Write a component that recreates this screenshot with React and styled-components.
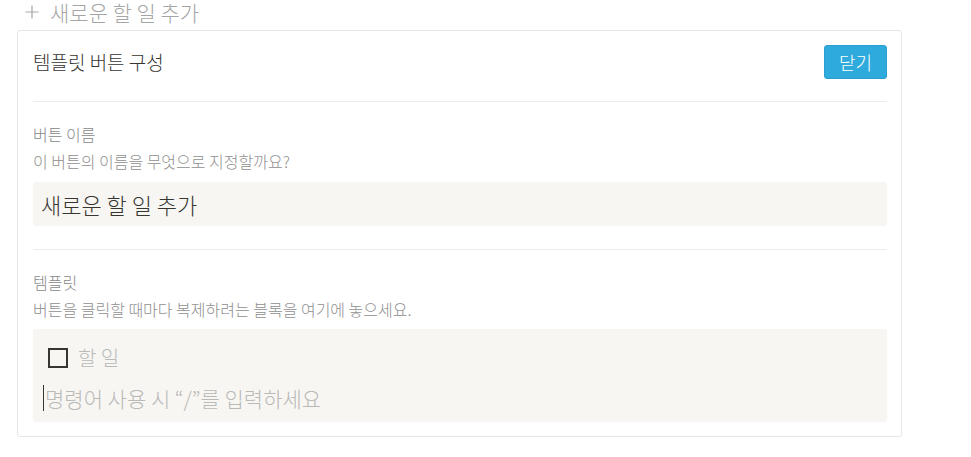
import React from 'react'
import styled, { createGlobalStyle } from 'styled-components'

const GlobalStyle = createGlobalStyle`
  body {
    margin: 0;
    background: #fff;
    font-family: "Noto Sans CJK KR", "Noto Sans", sans-serif;
    font-weight: 300;
    color: #37352f;
  }
`

const Page = styled.div`
  padding-left: 17px;
  width: 885px;
`

const AddRow = styled.div`
  display: flex;
  align-items: center;
  gap: 11px;
  height: 22px;
  padding-top: 1px;
  padding-left: 8px;
  color: #a5a5a5;
  font-size: 21px;
  line-height: 22px;
`

const Card = styled.div`
  margin-top: 7px;
  border: 1px solid #e6e6e6;
  border-radius: 3px;
  padding: 0 14px 14px 15px;
`

const Header = styled.div`
  display: flex;
  align-items: center;
  justify-content: space-between;
  padding: 14px 0 22px;
  border-bottom: 1px solid #ebebeb;
`

const Title = styled.div`
  font-size: 19px;
  line-height: 24px;
  color: #37352f;
`

const CloseButton = styled.button`
  height: 34px;
  padding: 0 14px;
  background: #2eaadc;
  border: 1px solid #2a9fce;
  border-radius: 3px;
  color: #fff;
  font-family: inherit;
  font-weight: 300;
  font-size: 18px;
  line-height: 1;
`

const Section = styled.div`
  padding-top: ${p => p.$top}px;
  padding-bottom: ${p => p.$bottom}px;
  border-bottom: ${p => (p.$divider ? '1px solid #ebebeb' : 'none')};
`

const Label = styled.div`
  font-size: 16px;
  line-height: 20px;
  color: #888888;
`

const Hint = styled.div`
  margin-top: 7px;
  font-size: 16px;
  line-height: 20px;
  color: #8f8f8f;
`

const NameInput = styled.div`
  margin-top: 11px;
  height: 44px;
  display: flex;
  align-items: center;
  padding-left: 8px;
  background: #f7f6f3;
  border-radius: 3px;
  font-size: 22px;
  line-height: 26px;
  color: #37352f;
`

const TemplateBox = styled.div`
  margin-top: 10px;
  background: #f7f6f3;
  border-radius: 3px;
  padding: 13px 0 8px;
  display: flex;
  flex-direction: column;
  gap: 8px;
`

const TodoRow = styled.div`
  display: flex;
  align-items: center;
  gap: 10px;
  height: 32px;
  padding-left: 15px;
  font-size: 20px;
  line-height: 26px;
  color: #b9b9b7;
`

const Checkbox = styled.span`
  width: 20px;
  height: 20px;
  box-sizing: border-box;
  border: 2px solid #37352f;
`

const CommandRow = styled.div`
  display: flex;
  align-items: center;
  gap: 1px;
  height: 32px;
  padding-left: 10px;
  font-size: 21px;
  line-height: 26px;
  color: #b9b9b7;
`

const Caret = styled.span`
  width: 1px;
  height: 26px;
  background: #37352f;
`

const PlusIcon = () => (
  <svg width="14" height="14" viewBox="0 0 14 14">
    <path d="M7 0.5v13M0.5 7h13" stroke="#a5a5a5" strokeWidth="1.2" />
  </svg>
)

export default function App() {
  return (
    <Page>
      <GlobalStyle />
      <AddRow>
        <PlusIcon />
        <span>새로운 할 일 추가</span>
      </AddRow>
      <Card>
        <Header>
          <Title>템플릿 버튼 구성</Title>
          <CloseButton>닫기</CloseButton>
        </Header>
        <Section $top={22} $bottom={23} $divider>
          <Label>버튼 이름</Label>
          <Hint>이 버튼의 이름을 무엇으로 지정할까요?</Hint>
          <NameInput>새로운 할 일 추가</NameInput>
        </Section>
        <Section $top={22} $bottom={0}>
          <Label>템플릿</Label>
          <Hint>버튼을 클릭할 때마다 복제하려는 블록을 여기에 놓으세요.</Hint>
          <TemplateBox>
            <TodoRow>
              <Checkbox />
              <span>할 일</span>
            </TodoRow>
            <CommandRow>
              <Caret />
              <span>명령어 사용 시 “/”를 입력하세요</span>
            </CommandRow>
          </TemplateBox>
        </Section>
      </Card>
    </Page>
  )
}
